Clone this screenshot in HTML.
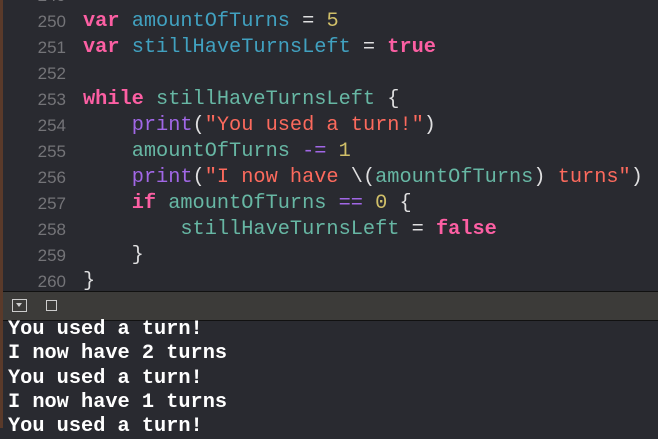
<!DOCTYPE html>
<html><head><style>
body{margin:0;width:658px;height:428px;overflow:hidden;background:#292a30;position:relative;font-family:"Liberation Mono",monospace;}
.lb{position:absolute;left:0;top:0;width:3px;height:428px;background:#5a3a2a;}
.ed{position:absolute;left:3px;top:-17px;right:0;}
.l{height:26px;line-height:26px;font-size:20.3px;white-space:pre;color:#dfdfe0;position:relative;}
.n{position:absolute;left:0;width:63px;text-align:right;color:#747478;font-family:"Liberation Sans",sans-serif;font-size:17px;}
.c{position:absolute;left:80px;}
.k{color:#fc5fa3;font-weight:bold}
.v{color:#41a1c0}
.t{color:#67b7a4}
.p{color:#a167e6}
.s{color:#fc6a5d}
.d{color:#d0bf69}
.bar{position:absolute;left:3px;right:0;top:291px;height:28px;background:#3c3b39;border-top:1px solid #111;border-bottom:1px solid #111;}
.out{position:absolute;left:8px;top:318px;color:#fff;font-weight:bold;font-size:20.3px;line-height:24.3px;white-space:pre;}
</style></head><body>
<div class="lb"></div>
<div class="ed">
<div class="l"><span class="n">249</span></div>
<div class="l"><span class="n">250</span><span class="c"><span class="k">var</span> <span class="v">amountOfTurns</span> = <span class="d">5</span></span></div>
<div class="l"><span class="n">251</span><span class="c"><span class="k">var</span> <span class="v">stillHaveTurnsLeft</span> = <span class="k">true</span></span></div>
<div class="l"><span class="n">252</span></div>
<div class="l"><span class="n">253</span><span class="c"><span class="k">while</span> <span class="t">stillHaveTurnsLeft</span> {</span></div>
<div class="l"><span class="n">254</span><span class="c">    <span class="p">print</span>(<span class="s">"You used a turn!"</span>)</span></div>
<div class="l"><span class="n">255</span><span class="c">    <span class="t">amountOfTurns</span> <span class="p">-=</span> <span class="d">1</span></span></div>
<div class="l"><span class="n">256</span><span class="c">    <span class="p">print</span>(<span class="s">"I now have </span>\(<span class="t">amountOfTurns</span>)<span class="s"> turns"</span>)</span></div>
<div class="l"><span class="n">257</span><span class="c">    <span class="k">if</span> <span class="t">amountOfTurns</span> <span class="p">==</span> <span class="d">0</span> {</span></div>
<div class="l"><span class="n">258</span><span class="c">        <span class="t">stillHaveTurnsLeft</span> = <span class="k">false</span></span></div>
<div class="l"><span class="n">259</span><span class="c">    }</span></div>
<div class="l"><span class="n">260</span><span class="c">}</span></div>
</div>
<div class="bar">
<div style="position:absolute;left:9px;top:7px;width:13px;height:11px;border:1px solid #ccc;"><div style="position:absolute;left:3px;top:3px;width:0;height:0;border-left:3.5px solid transparent;border-right:3.5px solid transparent;border-top:4px solid #ccc;"></div></div>
<div style="position:absolute;left:43px;top:8px;width:9px;height:9px;border:1px solid #ccc;"></div>
</div>
<div class="out">You used a turn!
I now have 2 turns
You used a turn!
I now have 1 turns
You used a turn!</div>
</body></html>
